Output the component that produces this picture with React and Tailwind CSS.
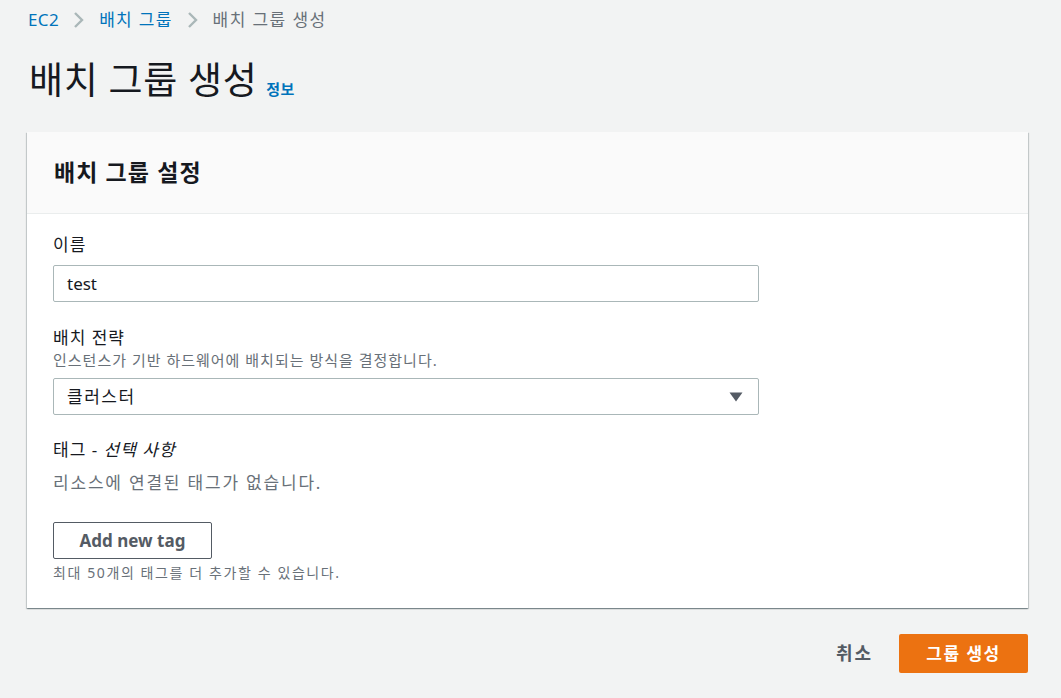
import React from "react";

const ChevronRight = () => (
  <svg width="14" height="18" viewBox="0 0 14 18" className="mx-[13px]">
    <path d="M3 2 L10 9 L3 16" fill="none" stroke="#aab7b8" strokeWidth="2.4" />
  </svg>
);

export default function App() {
  return (
    <div
      className="min-h-[698px] bg-[#f2f3f3] pl-[27px] pr-[33px] text-[#16191f]"
      style={{ fontFamily: '"Noto Sans", "Noto Sans CJK KR", sans-serif' }}
    >
      {/* breadcrumb */}
      <div className="flex items-center h-[42px] text-[17px] tracking-[0.4px] pl-[1px] pb-[2px]">
        <span className="text-[#0073bb]">EC2</span>
        <ChevronRight />
        <span className="text-[#0073bb] tracking-[1.3px]">배치 그룹</span>
        <ChevronRight />
        <span className="text-[#687078] tracking-[1.4px]">배치 그룹 생성</span>
      </div>

      {/* title */}
      <div className="flex items-end gap-[9px] pl-[2px] h-[66px] pb-[10px]">
        <h1 className="text-[37px] leading-none font-normal tracking-[0.6px]">배치 그룹 생성</h1>
        <span className="text-[15px] leading-none text-[#0073bb] font-bold mb-[1px] tracking-[0.5px]">정보</span>
      </div>

      {/* card */}
      <div className="mt-[24px] bg-white shadow-[0_1px_1px_0_rgba(0,28,36,0.3),1px_1px_1px_0_rgba(0,28,36,0.15),-1px_1px_1px_0_rgba(0,28,36,0.15)]">
        <div className="bg-[#fafafa] border-b border-[#eaeded] h-[82px] flex items-center px-[27px]">
          <h2 className="text-[23px] font-bold tracking-[1.1px]">배치 그룹 설정</h2>
        </div>
        <div className="px-[26px] pt-[20px] pb-[25px]">
          <div className="text-[17px] leading-[22px] tracking-[1px]">이름</div>
          <div className="mt-[9px] w-[706px] h-[37px] border border-[#aab7b8] rounded-[2px] flex items-center px-[13px] text-[17px]">
            test
          </div>

          <div className="mt-[25px] text-[17px] leading-[22px] tracking-[1px]">배치 전략</div>
          <div className="text-[15px] leading-[22px] text-[#687078] tracking-[1px]">
            인스턴스가 기반 하드웨어에 배치되는 방식을 결정합니다.
          </div>
          <div className="mt-[7px] w-[706px] h-[37px] border border-[#aab7b8] rounded-[2px] flex items-center justify-between pl-[13px] pr-[15px] text-[17px]">
            <span className="tracking-[1.5px]">클러스터</span>
            <svg width="14" height="10" viewBox="0 0 14 10">
              <path d="M0.5 0.5 H13.5 L7 9.5 Z" fill="#545b64" />
            </svg>
          </div>

          <div className="mt-[24px] text-[17px] leading-[22px] tracking-[1px]">
            태그 - <i>선택 사항</i>
          </div>
          <div className="mt-[11px] text-[17px] leading-[22px] text-[#687078] tracking-[1.8px]">
            리소스에 연결된 태그가 없습니다.
          </div>
          <button className="mt-[28px] w-[159px] h-[37px] border border-[#545b64] rounded-[2px] bg-white text-[17px] font-bold text-[#545b64]">
            Add new tag
          </button>
          <div className="mt-[4px] text-[14px] leading-[20px] text-[#687078] tracking-[1.6px]">
            최대 50개의 태그를 더 추가할 수 있습니다.
          </div>
        </div>
      </div>

      {/* footer */}
      <div className="flex justify-end items-center gap-[26px] mt-[26px]">
        <button className="text-[18px] font-bold text-[#545b64] tracking-[2px]">취소</button>
        <button className="w-[129px] h-[39px] bg-[#ec7211] rounded-[2px] text-white text-[17px] font-bold tracking-[1.5px]">
          그룹 생성
        </button>
      </div>
    </div>
  );
}
